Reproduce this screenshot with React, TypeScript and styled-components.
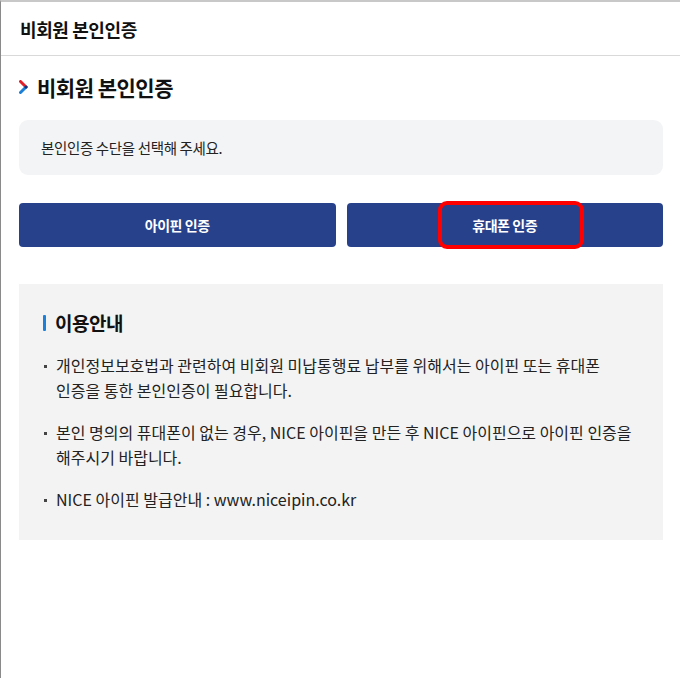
import React from "react";
import styled, { createGlobalStyle } from "styled-components";

const Global = createGlobalStyle`
  html, body { margin: 0; padding: 0; background: #fff; }
  body { font-family: "Noto Sans CJK KR", "Noto Sans", sans-serif; color: #111; }
`;

const Frame = styled.div`
  width: 680px;
  height: 678px;
  box-sizing: border-box;
  border-top: 2px solid #c8c8c8;
  border-left: 1px solid #8a8a8a;
  background: #fff;
  overflow: hidden;
`;

const Header = styled.header`
  height: 53px;
  display: flex;
  align-items: center;
  padding-left: 19px;
  border-bottom: 1px solid #d9d9d9;
  font-size: 18px;
  font-weight: 700;
  letter-spacing: -0.4px;
  color: #111;
`;

const Body = styled.main`
  padding: 0 17px 0 18px;
  display: flex;
  flex-direction: column;
`;

const SectionTitle = styled.h2`
  margin: 15px 0 0;
  height: 32px;
  display: flex;
  align-items: center;
  gap: 9px;
  font-size: 21px;
  font-weight: 700;
  letter-spacing: -0.5px;
  color: #111;
`;

const Notice = styled.div`
  margin-top: 17px;
  height: 55px;
  display: flex;
  align-items: center;
  padding-left: 22px;
  background: #f3f4f6;
  border-radius: 9px;
  font-size: 14.5px;
  letter-spacing: -0.35px;
  color: #222;
`;

const ButtonRow = styled.div`
  margin-top: 28px;
  display: grid;
  grid-template-columns: 1fr 1fr;
  gap: 11px;
`;

const AuthButton = styled.button`
  position: relative;
  height: 44px;
  border: none;
  border-radius: 4px;
  background: #27418a;
  color: #fff;
  font-family: inherit;
  font-size: 14px;
  font-weight: 700;
  letter-spacing: -0.4px;
  cursor: pointer;
`;

const Highlight = styled.span`
  position: absolute;
  left: 91px;
  top: -2px;
  width: 146px;
  height: 48px;
  box-sizing: border-box;
  border: 4px solid #ff0000;
  border-radius: 9px;
  pointer-events: none;
`;

const Guide = styled.section`
  margin-top: 37px;
  height: 256px;
  box-sizing: border-box;
  background: #f3f3f3;
  padding: 25px 24px 0 24px;
`;

const GuideTitle = styled.h3`
  margin: 0;
  display: flex;
  align-items: center;
  gap: 9px;
  font-size: 19px;
  font-weight: 700;
  letter-spacing: -0.5px;
  color: #111;
  &::before {
    content: "";
    width: 3px;
    height: 16px;
    background: #1a80d9;
    border-radius: 1px;
  }
`;

const List = styled.ul`
  list-style: none;
  margin: 17px 0 0;
  padding: 0;
  display: flex;
  flex-direction: column;
  gap: 17px;
`;

const Item = styled.li`
  position: relative;
  padding-left: 13px;
  font-size: 16px;
  line-height: 25px;
  letter-spacing: 0;
  color: #222;
  white-space: nowrap;
  &::before {
    content: "";
    position: absolute;
    left: 1px;
    top: 12px;
    width: 3px;
    height: 3px;
    background: #444;
  }
`;

const Chevron = () => (
  <svg width="9" height="14" viewBox="0 0 9 14" aria-hidden="true">
    <path d="M1.5 1.5 L7 7" stroke="#e0202a" strokeWidth="3" strokeLinecap="round" />
    <path d="M7 7 L1.5 12.5" stroke="#1b7fd6" strokeWidth="3" strokeLinecap="round" />
    <circle cx="7" cy="7" r="1.6" fill="#1b2f7a" />
  </svg>
);

export default function App() {
  return (
    <>
      <Global />
      <Frame>
        <Header>비회원 본인인증</Header>
        <Body>
          <SectionTitle>
            <Chevron />
            비회원 본인인증
          </SectionTitle>
          <Notice>본인인증 수단을 선택해 주세요.</Notice>
          <ButtonRow>
            <AuthButton>아이핀 인증</AuthButton>
            <AuthButton>
              휴대폰 인증
              <Highlight />
            </AuthButton>
          </ButtonRow>
          <Guide>
            <GuideTitle>이용안내</GuideTitle>
            <List>
              <Item>
                개인정보보호법과 관련하여 비회원 미납통행료 납부를 위해서는 아이핀 또는 휴대폰
                <br />
                인증을 통한 본인인증이 필요합니다.
              </Item>
              <Item>
                본인 명의의 퓨대폰이 없는 경우, NICE 아이핀을 만든 후 NICE 아이핀으로 아이핀 인증을
                <br />
                해주시기 바랍니다.
              </Item>
              <Item>NICE 아이핀 발급안내 : www.niceipin.co.kr</Item>
            </List>
          </Guide>
        </Body>
      </Frame>
    </>
  );
}
